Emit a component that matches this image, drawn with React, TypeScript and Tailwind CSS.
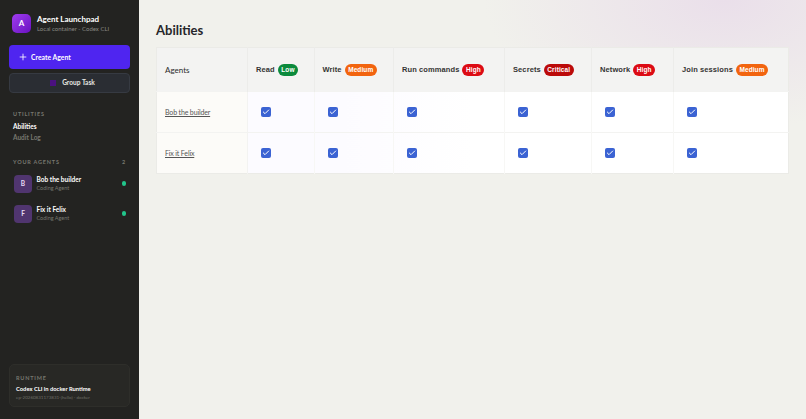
import { Check, Plus } from "lucide-react"

const risk = {
  Low: "bg-[#0b8a3c]",
  Medium: "bg-[#f2640f]",
  High: "bg-[#dc0b14]",
  Critical: "bg-[#bb0a0a]",
}

const abilities: { name: string; level: keyof typeof risk; width: string }[] = [
  { name: "Read", level: "Low", width: "w-[66.5px]" },
  { name: "Write", level: "Medium", width: "w-[79.5px]" },
  { name: "Run commands", level: "High", width: "w-[111px]" },
  { name: "Secrets", level: "Critical", width: "w-[87px]" },
  { name: "Network", level: "High", width: "w-[82px]" },
  { name: "Join sessions", level: "Medium", width: "w-[115px]" },
]

const agents = [
  { name: "Bob the builder", letter: "B" },
  { name: "Fix it Felix", letter: "F" },
]

function Tick() {
  return (
    <span className="flex h-[10px] w-[10px] items-center justify-center rounded-[2px] bg-[#3b63d3]">
      <Check className="h-[8px] w-[8px] text-white" strokeWidth={3} />
    </span>
  )
}

export default function App() {
  return (
    <div className="flex h-[419px] w-[806px] overflow-hidden font-['Lato',sans-serif] antialiased">
      <aside className="flex w-[139px] shrink-0 flex-col bg-[#232321] px-[9px] pb-[12px] pt-[13px]">
        <div className="flex items-center gap-[6px] px-[3px]">
          <div className="flex h-[19px] w-[19px] items-center justify-center rounded-[5px] bg-gradient-to-br from-[#a03bf0] to-[#6a0fc0] text-[8px] font-bold text-white">
            A
          </div>
          <div className="pt-[1px]">
            <div className="text-[8px] font-bold leading-[11px] text-white">Agent Launchpad</div>
            <div className="text-[6px] leading-[8px] text-[#8a8a84]">Local container - Codex CLI</div>
          </div>
        </div>

        <button className="mt-[12px] flex h-[24px] items-center gap-[3px] rounded-[4px] bg-[#4f25f0] pl-[9px] text-[6.8px] font-bold text-white">
          <Plus className="h-[10px] w-[10px]" />
          Create Agent
        </button>
        <button className="mt-[4px] flex h-[20px] items-center justify-center gap-[6px] rounded-[4px] border border-[#363a42] bg-[#2a2d33] pl-[6px] text-[6.6px] font-bold text-[#e6e6e2]">
          <span className="h-[6px] w-[6px] bg-[#4b1180]" />
          Group Task
        </button>

        <div className="mt-[17px] px-[4px] text-[5.5px] font-bold tracking-[0.8px] text-[#77776f]">UTILITIES</div>
        <div className="mt-[4px] px-[4px] text-[6.5px] font-bold leading-[10.5px] text-white">Abilities</div>
        <div className="px-[4px] text-[6.5px] font-bold leading-[10.5px] text-[#77776f]">Audit Log</div>

        <div className="mt-[15px] flex items-center justify-between px-[4px] text-[5.5px] font-bold tracking-[0.8px] text-[#77776f]">
          <span>YOUR AGENTS</span>
          <span>2</span>
        </div>
        <div className="mt-[8px] flex flex-col gap-[12px] pl-[5px] pr-[4px]">
          {agents.map((a) => (
            <div key={a.name} className="flex items-center gap-[4.5px]">
              <div className="flex h-[18px] w-[18px] items-center justify-center rounded-[4px] bg-[#50356f] text-[6.5px] font-bold text-[#e8dcf5]">
                {a.letter}
              </div>
              <div className="flex-1">
                <div className="text-[6.5px] font-bold leading-[9px] text-white">{a.name}</div>
                <div className="text-[5.5px] leading-[8px] text-[#77776f]">Coding Agent</div>
              </div>
              <span className="h-[4.5px] w-[4.5px] rounded-full bg-[#22c58b]" />
            </div>
          ))}
        </div>

        <div className="mt-auto rounded-[5px] border border-[#2e2e2a] bg-[#282825] px-[6px] pb-[4px] pt-[9px]">
          <div className="text-[5.5px] font-bold tracking-[0.8px] text-[#77776f]">RUNTIME</div>
          <div className="mt-[3px] whitespace-nowrap text-[5.8px] font-bold leading-[8px] text-white">Codex CLI in docker Runtime</div>
          <div className="mt-[1px] whitespace-nowrap text-[4.5px] leading-[8px] text-[#6f6f68]">ep-20260831173831-(hello) - docker</div>
        </div>
      </aside>

      <main className="flex-1 bg-[#f1f1ec] bg-[radial-gradient(ellipse_240px_130px_at_585px_0px,#eadfea,transparent)] pl-[17px] pr-[18px] pt-[20px]">
        <h1 className="text-[13px] font-bold leading-[20px] text-[#26262a]">Abilities</h1>
        <table className="mt-[7px] w-[632px] table-fixed border-collapse border border-[#ebebe7] bg-white">
          <thead>
            <tr className="h-[44px] bg-[#f3f3f2]">
              <th className="w-[91px] border-r border-[#ececea] pl-[8px] text-left text-[8px] font-normal text-[#2b2b2b]">Agents</th>
              {abilities.map((ab) => (
                <th key={ab.name} className={`${ab.width} border-r border-[#ececea] pl-[8px] text-left last:border-r-0`}>
                  <span className="flex items-center gap-[3px] whitespace-nowrap font-['Liberation_Sans',sans-serif] text-[7.5px] font-bold tracking-[0.1px] text-[#333]">
                    {ab.name}
                    <span className={`${risk[ab.level]} rounded-full px-[3.5px] py-[2px] text-[6.5px] leading-[8px] text-white`}>{ab.level}</span>
                  </span>
                </th>
              ))}
            </tr>
          </thead>
          <tbody>
            {agents.map((a) => (
              <tr key={a.name} className="h-[41px] border-t border-[#f3f3f1] bg-[linear-gradient(90deg,#fcfbff_0%,#fcfbff_30%,#ffffff_50%)]">
                <td className="border-r border-[#f3f3f1] bg-[#fcfbf8] pl-[8px] text-[7px] tracking-[-0.15px] text-[#555] underline">{a.name}</td>
                {abilities.map((ab) => (
                  <td key={ab.name} className="border-r border-[#f7f7f5] pl-[13px] last:border-r-0">
                    <Tick />
                  </td>
                ))}
              </tr>
            ))}
          </tbody>
        </table>
      </main>
    </div>
  )
}
